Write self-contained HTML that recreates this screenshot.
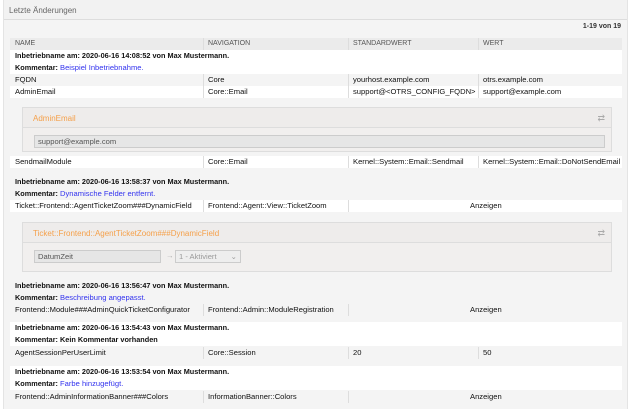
<!DOCTYPE html>
<html><head><meta charset="utf-8"><style>
*{box-sizing:border-box;margin:0;padding:0}
body{width:632px;height:409px;overflow:hidden;background:#fff;font-family:"Liberation Sans",sans-serif;font-size:7.6px;color:#111;position:relative}
.w{position:absolute;left:3px;top:0;width:625px;height:409px;background:#f4f4f4;border-left:1px solid #e4e4e4;border-right:1px solid #e4e4e4}
.hd{position:absolute;left:0;top:0;width:100%;height:20px;border-bottom:1px solid #ddd;background:#f2f2f2;color:#666;font-size:8px;padding:6px 0 0 5px}
.a{position:absolute;white-space:nowrap}
.r{position:absolute;left:10px;width:612px;height:12px}
.g{background:#fff}
.d{background:#f4f4f4}
.d2{background:#fff}
.th{background:#ebebeb;color:#555;font-size:7px}
.c{position:absolute;top:0;height:12px;line-height:12px;white-space:nowrap}
.sep{position:absolute;top:0;width:1px;height:12px;background:#ddd}
.b{font-weight:bold;font-size:7.3px}
.bl{color:#3333ee;font-weight:normal;font-size:7.6px}
.box{position:absolute;left:22px;width:590px;border:1px solid #ddd;background:#f1efee}
.bh{height:20px;border-bottom:1px solid #ddd;color:#f5a04a;font-size:8px;padding:6px 0 0 10px;position:relative;background:#eeeceb}
.ic{position:absolute;right:6px;top:5px;color:#aaa;font-size:9px}
.inp{position:absolute;background:#e6e6e6;border:1px solid #ccc;color:#555;height:13px;line-height:11px;padding-left:3px}
</style></head><body>
<div class="w">
<div class="hd">Letzte Änderungen</div>
<div class="a" style="right:6px;top:23px;font-size:7px;font-weight:bold;color:#333">1-19 von 19</div>
</div>

<div class="r th" style="top:38px"><div class="c" style="left:5px">NAME</div><div class="sep" style="left:193px"></div><div class="c" style="left:198px">NAVIGATION</div><div class="sep" style="left:338px"></div><div class="c" style="left:343px">STANDARDWERT</div><div class="sep" style="left:468px"></div><div class="c" style="left:473px">WERT</div></div>

<div class="r g" style="top:50px;height:24px"><div class="c b" style="left:5px">Inbetriebname am: 2020-06-16 14:08:52 von Max Mustermann.</div><div class="c b" style="left:5px;top:12px">Kommentar: <span class="bl">Beispiel Inbetriebnahme.</span></div></div>
<div class="r d" style="top:74px"><div class="c" style="left:5px">FQDN</div><div class="sep" style="left:193px"></div><div class="c" style="left:198px">Core</div><div class="sep" style="left:338px"></div><div class="c" style="left:343px">yourhost.example.com</div><div class="sep" style="left:468px"></div><div class="c" style="left:473px">otrs.example.com</div></div>
<div class="r d2" style="top:86px"><div class="c" style="left:5px">AdminEmail</div><div class="sep" style="left:193px"></div><div class="c" style="left:198px">Core::Email</div><div class="sep" style="left:338px"></div><div class="c" style="left:343px">support@&lt;OTRS_CONFIG_FQDN&gt;</div><div class="sep" style="left:468px"></div><div class="c" style="left:473px">support@example.com</div></div>

<div class="box" style="top:107px;height:45px"><div class="bh">AdminEmail<span class="ic">⇄</span></div><div class="inp" style="left:11px;top:27px;width:571px">support@example.com</div></div>

<div class="r g" style="top:156px"><div class="c" style="left:5px">SendmailModule</div><div class="sep" style="left:193px"></div><div class="c" style="left:198px">Core::Email</div><div class="sep" style="left:338px"></div><div class="c" style="left:343px">Kernel::System::Email::Sendmail</div><div class="sep" style="left:468px"></div><div class="c" style="left:473px">Kernel::System::Email::DoNotSendEmail</div></div>

<div class="r" style="top:176px;height:24px"><div class="c b" style="left:5px">Inbetriebname am: 2020-06-16 13:58:37 von Max Mustermann.</div><div class="c b" style="left:5px;top:12px">Kommentar: <span class="bl">Dynamische Felder entfernt.</span></div></div>
<div class="r g" style="top:200px"><div class="c" style="left:5px">Ticket::Frontend::AgentTicketZoom###DynamicField</div><div class="sep" style="left:193px"></div><div class="c" style="left:198px">Frontend::Agent::View::TicketZoom</div><div class="sep" style="left:338px"></div><div class="c" style="left:460px">Anzeigen</div></div>

<div class="box" style="top:222px;height:50px"><div class="bh">Ticket::Frontend::AgentTicketZoom###DynamicField<span class="ic">⇄</span></div><div class="inp" style="left:11px;top:27px;width:127px">DatumZeit</div><div class="a" style="left:143px;top:28px;color:#aaa">→</div><div class="inp" style="left:152px;top:27px;width:66px;background:#eee;color:#999">1 - Aktiviert <span style="float:right;padding-right:3px">⌄</span></div></div>

<div class="r" style="top:280px;height:24px"><div class="c b" style="left:5px">Inbetriebname am: 2020-06-16 13:56:47 von Max Mustermann.</div><div class="c b" style="left:5px;top:12px">Kommentar: <span class="bl">Beschreibung angepasst.</span></div></div>
<div class="r g" style="top:304px;background:#f4f4f4"><div class="c" style="left:5px">Frontend::Module###AdminQuickTicketConfigurator</div><div class="sep" style="left:193px"></div><div class="c" style="left:198px">Frontend::Admin::ModuleRegistration</div><div class="sep" style="left:338px"></div><div class="c" style="left:460px">Anzeigen</div></div>

<div class="r g" style="top:322px;height:24px"><div class="c b" style="left:5px">Inbetriebname am: 2020-06-16 13:54:43 von Max Mustermann.</div><div class="c b" style="left:5px;top:12px">Kommentar: Kein Kommentar vorhanden</div></div>
<div class="r d" style="top:347px"><div class="c" style="left:5px">AgentSessionPerUserLimit</div><div class="sep" style="left:193px"></div><div class="c" style="left:198px">Core::Session</div><div class="sep" style="left:338px"></div><div class="c" style="left:343px">20</div><div class="sep" style="left:468px"></div><div class="c" style="left:473px">50</div></div>

<div class="r g" style="top:366px;height:24px"><div class="c b" style="left:5px">Inbetriebname am: 2020-06-16 13:53:54 von Max Mustermann.</div><div class="c b" style="left:5px;top:12px">Kommentar: <span class="bl">Farbe hinzugefügt.</span></div></div>
<div class="r d" style="top:391px"><div class="c" style="left:5px">Frontend::AdminInformationBanner###Colors</div><div class="sep" style="left:193px"></div><div class="c" style="left:198px">InformationBanner::Colors</div><div class="sep" style="left:338px"></div><div class="c" style="left:460px">Anzeigen</div></div>
</body></html>
